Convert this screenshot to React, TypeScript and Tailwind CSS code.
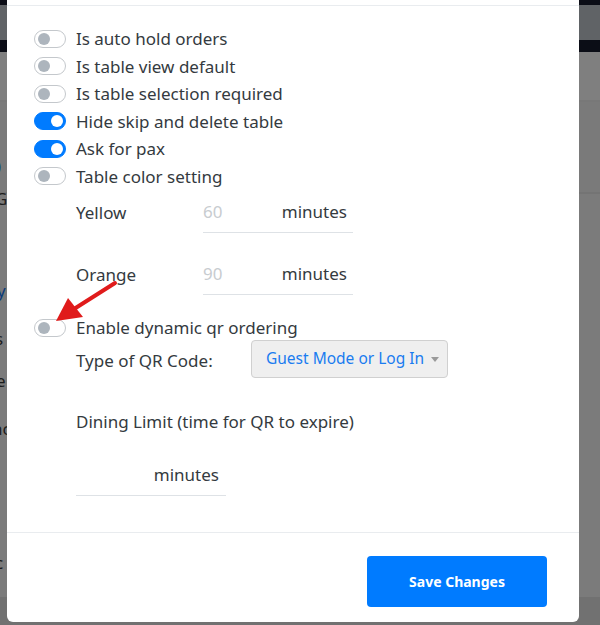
import { useState } from "react"

interface ToggleProps {
  checked: boolean
  onChange: () => void
}

function Toggle({ checked, onChange }: ToggleProps) {
  return (
    <button
      type="button"
      onClick={onChange}
      className={`relative h-[18px] w-[32px] shrink-0 rounded-full border ${
        checked ? "border-[#007bff] bg-[#007bff]" : "border-[#c4c8cc] bg-white"
      }`}
    >
      <span
        className={`absolute top-[2px] h-[12px] w-[12px] rounded-full ${
          checked ? "left-[16px] bg-white" : "left-[3px] bg-[#adb5bd]"
        }`}
      />
    </button>
  )
}

function ToggleRow({ label, checked, onChange }: { label: string; checked: boolean; onChange: () => void }) {
  return (
    <div className="flex h-[27.5px] items-center gap-[10px]">
      <Toggle checked={checked} onChange={onChange} />
      <span>{label}</span>
    </div>
  )
}

function MinutesInput({ value, width }: { value: string; width: string }) {
  return (
    <div className={`flex h-[41px] items-center justify-between border-b border-[#dee2e6] pr-[6px] ${width}`}>
      <span className="text-[#c8ccd0]">{value}</span>
      <span>minutes</span>
    </div>
  )
}

export default function App() {
  const [flags, setFlags] = useState({
    autoHold: false,
    tableView: false,
    tableSelection: false,
    hideSkip: true,
    askPax: true,
    tableColor: false,
    dynamicQr: false,
  })

  const flip = (key: keyof typeof flags) => setFlags({ ...flags, [key]: !flags[key] })

  return (
    <div className="relative h-[625px] w-[600px] overflow-hidden bg-[#7f7f7f] font-['Noto_Sans',sans-serif]">
      {/* backdrop page, dimmed */}
      <div className="flex flex-col">
        <div className="h-[5px] bg-[#0b0d16]" />
        <div className="h-[35px] bg-[#606366]" />
        <div className="h-[12px] bg-[#0b0d16]" />
        <div className="h-[48px] bg-[#7f7f7f]" />
        <div className="h-[2px] bg-[#787878]" />
        <div className="h-[90px] bg-[#7a7a7a]" />
        <div className="h-[2px] bg-[#747474]" />
        <div className="h-[403px] bg-[#7b7b7b]" />
        <div className="h-[28px] bg-[#717171]" />
      </div>
      <div className="absolute left-[-6px] top-[52px] text-[17px] text-[#1c1c1c]">(</div>
      <div className="absolute left-[-4px] top-[153px] text-[17px] text-[#0a3a7a]">)</div>
      <div className="absolute left-[-5px] top-[186px] text-[17px] text-[#1c1c1c]">G</div>
      <div className="absolute left-[-3px] top-[278px] text-[17px] text-[#0a3a7a]">y</div>
      <div className="absolute left-[-5px] top-[326px] text-[17px] text-[#1c1c1c]">s</div>
      <div className="absolute left-[-4px] top-[368px] text-[17px] text-[#1c1c1c]">e</div>
      <div className="absolute left-[-8px] top-[416px] text-[17px] text-[#1c1c1c]">nc</div>
      <div className="absolute left-[-5px] top-[550px] text-[17px] text-[#1c1c1c]">c</div>

      {/* modal */}
      <div className="absolute left-[7px] top-0 flex w-[572px] flex-col rounded-b-[6px] bg-white text-[17px] text-[#343a40]">
        <div className="h-[6px] border-b border-[#e9ecef]" />

        <div className="flex flex-col px-[27px] pt-[19px]">
          <ToggleRow label="Is auto hold orders" checked={flags.autoHold} onChange={() => flip("autoHold")} />
          <ToggleRow label="Is table view default" checked={flags.tableView} onChange={() => flip("tableView")} />
          <ToggleRow label="Is table selection required" checked={flags.tableSelection} onChange={() => flip("tableSelection")} />
          <ToggleRow label="Hide skip and delete table" checked={flags.hideSkip} onChange={() => flip("hideSkip")} />
          <ToggleRow label="Ask for pax" checked={flags.askPax} onChange={() => flip("askPax")} />
          <ToggleRow label="Table color setting" checked={flags.tableColor} onChange={() => flip("tableColor")} />

          <div className="mt-[2px] flex flex-col gap-[21px] pl-[42px]">
            <div className="flex items-center">
              <span className="w-[127px]">Yellow</span>
              <MinutesInput value="60" width="w-[150px]" />
            </div>
            <div className="flex items-center">
              <span className="w-[127px]">Orange</span>
              <MinutesInput value="90" width="w-[150px]" />
            </div>
          </div>

          <div className="mt-[19px]">
            <ToggleRow label="Enable dynamic qr ordering" checked={flags.dynamicQr} onChange={() => flip("dynamicQr")} />
          </div>

          <div className="-mt-[2px] flex flex-col pl-[42px]">
            <div className="flex items-center">
              <span className="mt-[4px] w-[175px]">Type of QR Code:</span>
              <button
                type="button"
                className="flex h-[38px] w-[197px] items-center gap-[7px] whitespace-nowrap rounded-[4px] border border-[#d0d0d0] bg-[#efefef] pl-[14px] text-[15.5px] text-[#1a7cf0]"
              >
                Guest Mode or Log In
                <span className="mt-[1px] h-0 w-0 border-x-[4px] border-t-[5px] border-x-transparent border-t-[#9a9a9a]" />
              </button>
            </div>
            <div className="mt-[31px]">Dining Limit (time for QR to expire)</div>
            <div className="mt-[21px]">
              <div className="flex h-[41px] w-[150px] items-center justify-end border-b border-[#dee2e6] pr-[7px]">
                minutes
              </div>
            </div>
          </div>
        </div>

        <div className="mt-[36px] flex justify-end border-t border-[#e9ecef] px-[32px] pb-[15px] pt-[23px]">
          <button
            type="button"
            className="h-[51px] w-[180px] rounded-[4px] bg-[#007bff] text-[14px] font-bold text-white"
          >
            Save Changes
          </button>
        </div>
      </div>

      {/* annotation arrow */}
      <svg className="absolute left-0 top-0" width="600" height="625" viewBox="0 0 600 625">
        <line x1="115" y1="283" x2="74" y2="309" stroke="#e01b1b" strokeWidth="4" strokeLinecap="round" />
        <polygon points="56,321 68,298 83,317" fill="#e01b1b" />
      </svg>
    </div>
  )
}
